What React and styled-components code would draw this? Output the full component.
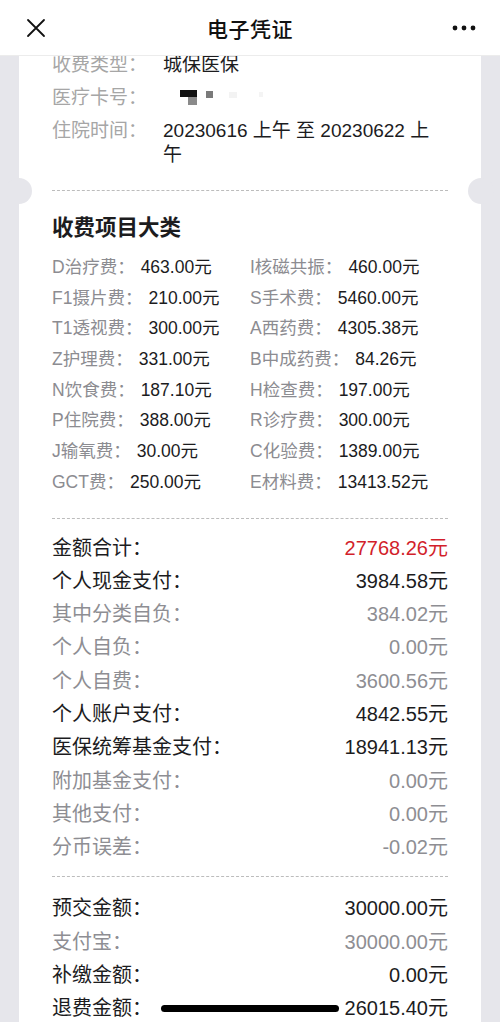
import styled, { createGlobalStyle } from "styled-components";

const GlobalStyle = createGlobalStyle`
  html, body {
    margin: 0;
    padding: 0;
    background: #e6e6eb;
  }
  body {
    font-family: "Liberation Sans", "Noto Sans CJK SC", sans-serif;
    color: #1c1c1e;
  }
`

const Page = styled.div`
  height: 1022px;
  overflow: hidden;
  background: #e6e6eb;
`

const Header = styled.header`
  position: relative;
  z-index: 2;
  display: grid;
  grid-template-columns: 72px 1fr 72px;
  align-items: center;
  height: 55px;
  background: #fff;
  border-bottom: 1px solid #ececec;
`

const Title = styled.h1`
  margin: 0;
  text-align: center;
  font-size: 21px;
  font-weight: 500;
  color: #111;
  letter-spacing: 0.5px;
`

const IconButton = styled.div`
  display: flex;
  align-items: center;
  justify-content: ${(p) => (p.$end ? "flex-end" : "flex-start")};
  padding: ${(p) => (p.$end ? "0 24px 0 0" : "0 0 0 26px")};
`

const Card = styled.main`
  background: #fff;
  margin: 0 19px;
  padding: 0 33px;
`

const InfoList = styled.div`
  display: flex;
  flex-direction: column;
  gap: 9px;
  margin-top: -3px;
`

const InfoRow = styled.div`
  display: flex;
  font-size: 19px;
  line-height: 24px;
`

const InfoLabel = styled.span`
  width: 111px;
  flex-shrink: 0;
  color: #a6a6a6;
`

const InfoValue = styled.span`
  max-width: 275px;
  color: #1c1c1e;
`

const Divider = styled.div`
  position: relative;
  margin-top: ${(p) => p.$gap}px;
  border-top: 1px dashed #bcbcbc;

  ${(p) =>
    p.$notch &&
    `
    &::before, &::after {
      content: "";
      position: absolute;
      top: -13px;
      width: 26px;
      height: 26px;
      border-radius: 50%;
      background: #e6e6eb;
    }
    &::before { left: -46px; }
    &::after { right: -46px; }
  `}
`

const Heading = styled.h2`
  margin: 22px 0 0;
  font-size: 21.5px;
  line-height: 30px;
  font-weight: 600;
  color: #1c1c1e;
`

const FeeGrid = styled.div`
  display: grid;
  grid-template-columns: 198px 1fr;
  grid-auto-rows: 30.7px;
  margin-top: 9px;
  font-size: 17.5px;
  line-height: 30.7px;
`

const FeeItem = styled.div`
  display: flex;
  gap: 6px;
  white-space: nowrap;
`

const FeeLabel = styled.span`
  color: #8c8c91;
`

const FeeValue = styled.span`
  color: #1c1c1e;
`

const SummaryList = styled.div`
  margin-top: ${(p) => p.$gap}px;
`

const SummaryRow = styled.div`
  position: relative;
  display: flex;
  justify-content: space-between;
  font-size: 20px;
  line-height: 33.3px;
  color: ${(p) => (p.$muted ? "#8e8e93" : "#1c1c1e")};
`

const Amount = styled.span`
  color: ${(p) => (p.$red ? "#d21f2b" : "inherit")};
`

const Scribble = styled.span`
  position: absolute;
  left: 109px;
  top: 13px;
  width: 178px;
  height: 7px;
  border-radius: 4px;
  background: #000;
`

const CloseIcon = () => (
  <svg width="20" height="20" viewBox="0 0 20 20">
    <path d="M2 2 L18 18 M18 2 L2 18" stroke="#111" strokeWidth="1.8" strokeLinecap="round" />
  </svg>
)

const MoreIcon = () => (
  <svg width="24" height="6" viewBox="0 0 24 6">
    <circle cx="3" cy="3" r="2.4" fill="#111" />
    <circle cx="12" cy="3" r="2.4" fill="#111" />
    <circle cx="21" cy="3" r="2.4" fill="#111" />
  </svg>
)

const Mosaic = () => (
  <svg width="100" height="20" viewBox="0 0 100 20" style={{ verticalAlign: "middle" }}>
    <rect x="17" y="1" width="17" height="7" fill="#111" />
    <rect x="25" y="8" width="9" height="8" fill="#8a8a8a" />
    <rect x="43" y="2" width="7" height="7" fill="#7a7a7a" />
    <rect x="66" y="3" width="8" height="6" fill="#f3f3f3" />
    <rect x="96" y="3" width="4" height="5" fill="#f4f4f4" />
  </svg>
)

const fees = [
  ["D治疗费：", "463.00元", "I核磁共振：", "460.00元"],
  ["F1摄片费：", "210.00元", "S手术费：", "5460.00元"],
  ["T1透视费：", "300.00元", "A西药费：", "4305.38元"],
  ["Z护理费：", "331.00元", "B中成药费：", "84.26元"],
  ["N饮食费：", "187.10元", "H检查费：", "197.00元"],
  ["P住院费：", "388.00元", "R诊疗费：", "300.00元"],
  ["J输氧费：", "30.00元", "C化验费：", "1389.00元"],
  ["GCT费：", "250.00元", "E材料费：", "13413.52元"],
]

const payments = [
  { label: "金额合计：", value: "27768.26元", red: true },
  { label: "个人现金支付：", value: "3984.58元" },
  { label: "其中分类自负：", value: "384.02元", muted: true },
  { label: "个人自负：", value: "0.00元", muted: true },
  { label: "个人自费：", value: "3600.56元", muted: true },
  { label: "个人账户支付：", value: "4842.55元" },
  { label: "医保统筹基金支付：", value: "18941.13元" },
  { label: "附加基金支付：", value: "0.00元", muted: true },
  { label: "其他支付：", value: "0.00元", muted: true },
  { label: "分币误差：", value: "-0.02元", muted: true },
]

const deposits = [
  { label: "预交金额：", value: "30000.00元" },
  { label: "支付宝：", value: "30000.00元", muted: true },
  { label: "补缴金额：", value: "0.00元" },
  { label: "退费金额：", value: "26015.40元", hidden: true },
]

export default function App() {
  return (
    <Page>
      <GlobalStyle />
      <Header>
        <IconButton>
          <CloseIcon />
        </IconButton>
        <Title>电子凭证</Title>
        <IconButton $end>
          <MoreIcon />
        </IconButton>
      </Header>

      <Card>
        <InfoList>
          <InfoRow>
            <InfoLabel>收费类型：</InfoLabel>
            <InfoValue>城保医保</InfoValue>
          </InfoRow>
          <InfoRow>
            <InfoLabel>医疗卡号：</InfoLabel>
            <InfoValue>
              <Mosaic />
            </InfoValue>
          </InfoRow>
          <InfoRow>
            <InfoLabel>住院时间：</InfoLabel>
            <InfoValue>20230616 上午 至 20230622 上午</InfoValue>
          </InfoRow>
        </InfoList>

        <Divider $gap={23} $notch />

        <Heading>收费项目大类</Heading>
        <FeeGrid>
          {fees.map(([l1, v1, l2, v2]) => [
            <FeeItem key={l1}>
              <FeeLabel>{l1}</FeeLabel>
              <FeeValue>{v1}</FeeValue>
            </FeeItem>,
            <FeeItem key={l2}>
              <FeeLabel>{l2}</FeeLabel>
              <FeeValue>{v2}</FeeValue>
            </FeeItem>,
          ])}
        </FeeGrid>

        <Divider $gap={20} />

        <SummaryList $gap={13}>
          {payments.map((p) => (
            <SummaryRow key={p.label} $muted={p.muted}>
              <span>{p.label}</span>
              <Amount $red={p.red}>{p.value}</Amount>
            </SummaryRow>
          ))}
        </SummaryList>

        <Divider $gap={12} />

        <SummaryList $gap={15}>
          {deposits.map((p) => (
            <SummaryRow key={p.label} $muted={p.muted}>
              <span>{p.label}</span>
              {p.hidden && <Scribble />}
              <Amount>{p.value}</Amount>
            </SummaryRow>
          ))}
        </SummaryList>
      </Card>
    </Page>
  );
}
